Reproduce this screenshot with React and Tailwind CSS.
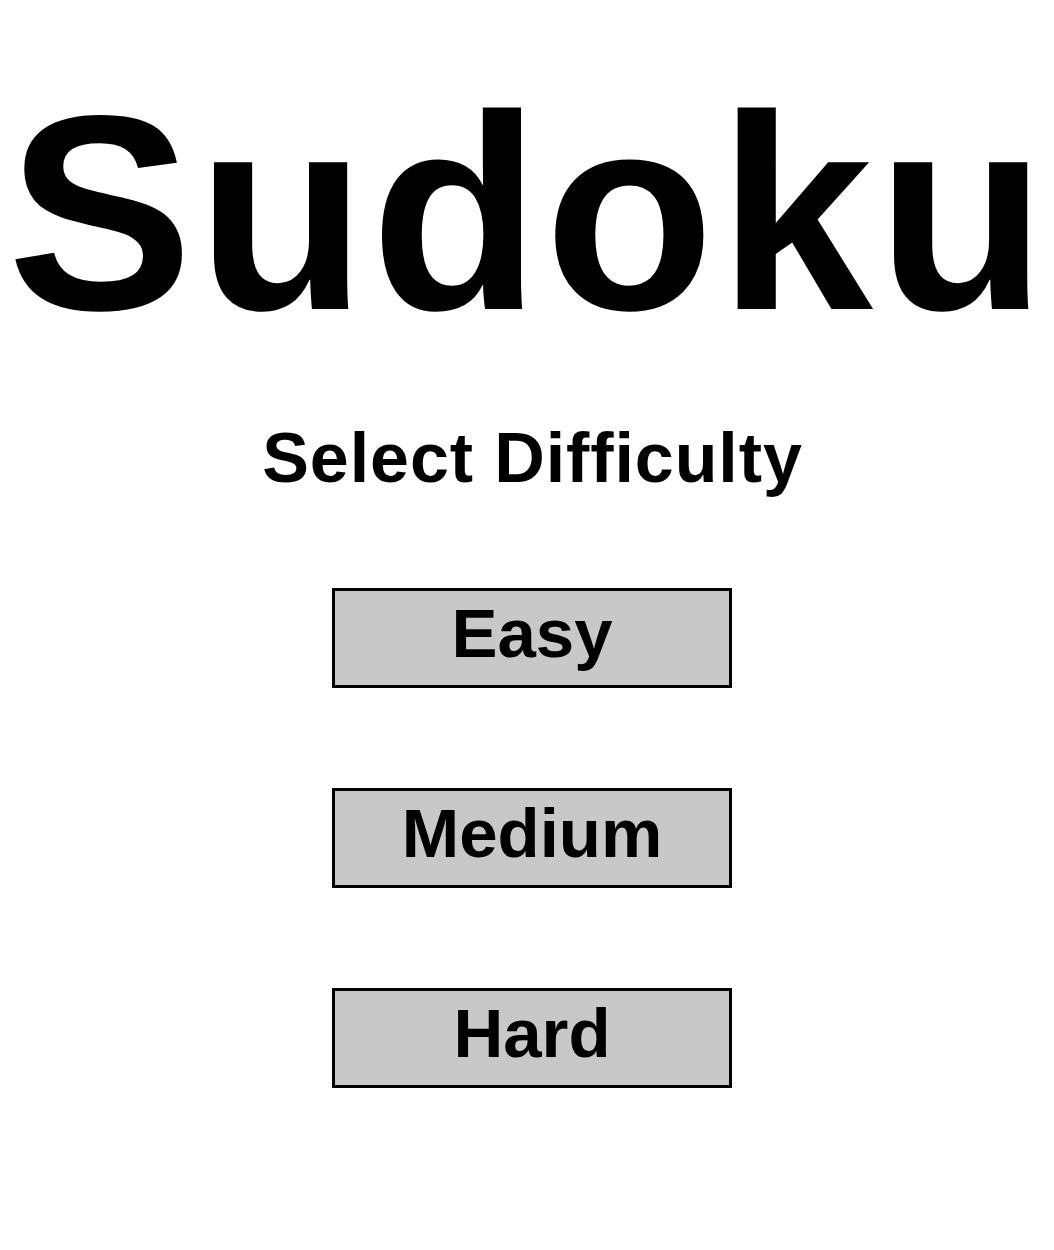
export default function App() {
  const levels = ["Easy", "Medium", "Hard"];
  return (
    <div
      className="flex min-h-[1250px] w-full flex-col bg-white text-black"
      style={{ fontFamily: '"Liberation Sans", Arial, sans-serif' }}
    >
      <div className="flex justify-center pt-[53px]">
        <h1 className="pl-[4px] text-[278px] font-bold leading-[1.15] tracking-[4px]">Sudoku</h1>
      </div>
      <div className="flex flex-col items-center pl-[10px]">
        <h2 className="mt-[45px] pl-[1px] text-[70px] font-bold leading-[1.15] tracking-[0.9px]">Select Difficulty</h2>
        <div className="mt-[90px] flex flex-col gap-[100px]">
          {levels.map((l) => (
            <button
              key={l}
              className="flex h-[100px] w-[400px] items-center justify-center border-[3px] border-black bg-[#c8c8c8] pb-[10px] text-[69px] font-bold leading-[1.15]"
            >
              {l}
            </button>
          ))}
        </div>
      </div>
    </div>
  );
}
